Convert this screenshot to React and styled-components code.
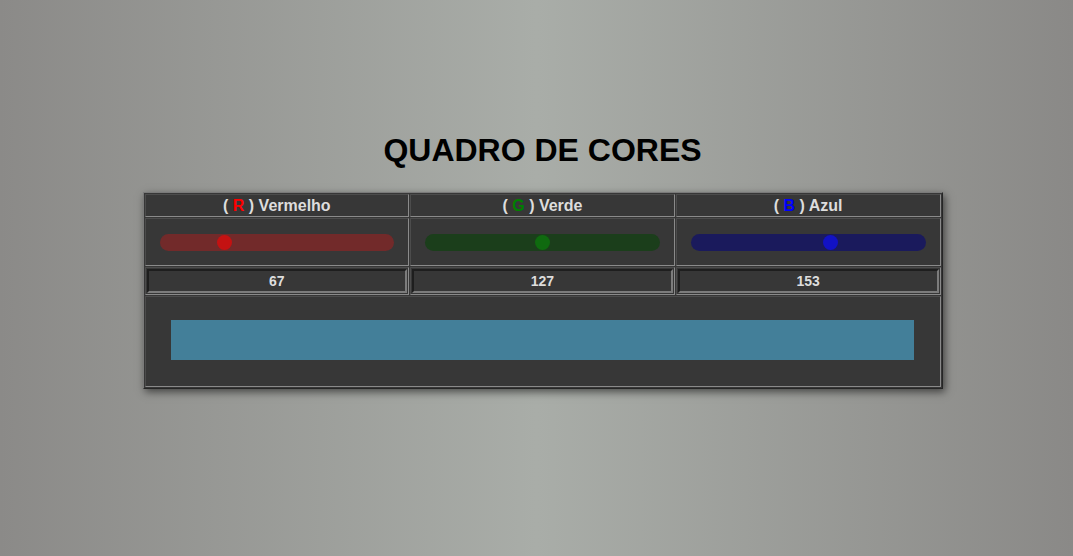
import React, { useState } from 'react';
import styled, { createGlobalStyle } from 'styled-components';

const GlobalStyle = createGlobalStyle`
  html, body {
    margin: 0;
    height: 100%;
  }
  body {
    background: linear-gradient(to right, #8b8a88 0%, #a9ada8 50%, #8a8987 100%);
    font-family: "Liberation Sans", Arial, sans-serif;
  }
`;

const Page = styled.div`
  display: flex;
  flex-direction: column;
  align-items: center;
  padding: 132px 0 0 12px;
`;

const Title = styled.h1`
  margin: 0 0 23px;
  font-size: 32px;
  font-weight: bold;
  color: #000;
`;

const Board = styled.table`
  width: 800px;
  border-collapse: separate;
  border-spacing: 1px;
  background: #373737;
  border: 1px solid;
  border-color: #7a7a7a #262626 #262626 #7a7a7a;
  box-shadow: 2px 3px 8px rgba(0, 0, 0, 0.55);
`;

const Cell = styled.td`
  padding: ${p => p.$pad || '1px'};
  border: 1px solid;
  border-color: #4c4c4c #8a8a8a #8a8a8a #4c4c4c;
  text-align: center;
  vertical-align: middle;
  width: ${p => (p.colSpan ? 'auto' : '33.33%')};
`;

const Head = styled.th`
  padding: 2px 1px 1px;
  border: 1px solid;
  border-color: #4c4c4c #8a8a8a #8a8a8a #4c4c4c;
  color: #dddddd;
  font-size: 16px;
  font-weight: bold;
  height: 18px;
  width: 33.33%;
`;

const Letter = styled.span`
  color: ${p => p.$color};
`;

const Slider = styled.input.attrs({ type: 'range', min: 0, max: 255 })`
  -webkit-appearance: none;
  appearance: none;
  display: block;
  width: calc(100% - 28px);
  height: 17px;
  margin: 15px auto 14px;
  border-radius: 9px;
  background: ${p => p.$track};
  outline: none;

  &::-webkit-slider-thumb {
    -webkit-appearance: none;
    width: 15px;
    height: 15px;
    border-radius: 50%;
    border: none;
    background: ${p => p.$thumb};
    cursor: pointer;
  }
  &::-moz-range-thumb {
    width: 15px;
    height: 15px;
    border-radius: 50%;
    border: none;
    background: ${p => p.$thumb};
  }
`;

const Value = styled.input`
  display: block;
  box-sizing: border-box;
  width: 100%;
  height: 24px;
  margin: 0;
  border: 2px solid;
  border-color: #1e1e1e #7c7c7c #7c7c7c #1e1e1e;
  background: #373737;
  color: #dddddd;
  font-family: "Liberation Sans", Arial, sans-serif;
  font-size: 14px;
  font-weight: bold;
  text-align: center;
  outline: none;
`;

const Preview = styled.div`
  height: 40px;
  margin: 23px 26px 26px 25px;
`;

const channels = [
  { key: 'r', letter: 'R', name: 'Vermelho', color: '#ff0000', track: '#722a2a', thumb: '#c41212' },
  { key: 'g', letter: 'G', name: 'Verde', color: '#008000', track: '#1b3e1b', thumb: '#0f6a0f' },
  { key: 'b', letter: 'B', name: 'Azul', color: '#0000ff', track: '#1a1a5c', thumb: '#1212c4' },
];

export default function App() {
  const [rgb, setRgb] = useState({ r: 67, g: 127, b: 153 });

  const update = (key, v) => {
    const n = Math.max(0, Math.min(255, Number(v) || 0));
    setRgb(prev => ({ ...prev, [key]: n }));
  };

  return (
    <>
      <GlobalStyle />
      <Page>
        <Title>QUADRO DE CORES</Title>
        <Board>
          <tbody>
            <tr>
              {channels.map(c => (
                <Head key={c.key}>
                  ( <Letter $color={c.color}>{c.letter}</Letter> ) {c.name}
                </Head>
              ))}
            </tr>
            <tr>
              {channels.map(c => (
                <Cell key={c.key} $pad="0">
                  <Slider
                    $track={c.track}
                    $thumb={c.thumb}
                    value={rgb[c.key]}
                    onChange={e => update(c.key, e.target.value)}
                  />
                </Cell>
              ))}
            </tr>
            <tr>
              {channels.map(c => (
                <Cell key={c.key}>
                  <Value
                    value={rgb[c.key]}
                    onChange={e => update(c.key, e.target.value)}
                  />
                </Cell>
              ))}
            </tr>
            <tr>
              <Cell colSpan={3} $pad="0">
                <Preview style={{ background: `rgb(${rgb.r}, ${rgb.g}, ${rgb.b})` }} />
              </Cell>
            </tr>
          </tbody>
        </Board>
      </Page>
    </>
  );
}
